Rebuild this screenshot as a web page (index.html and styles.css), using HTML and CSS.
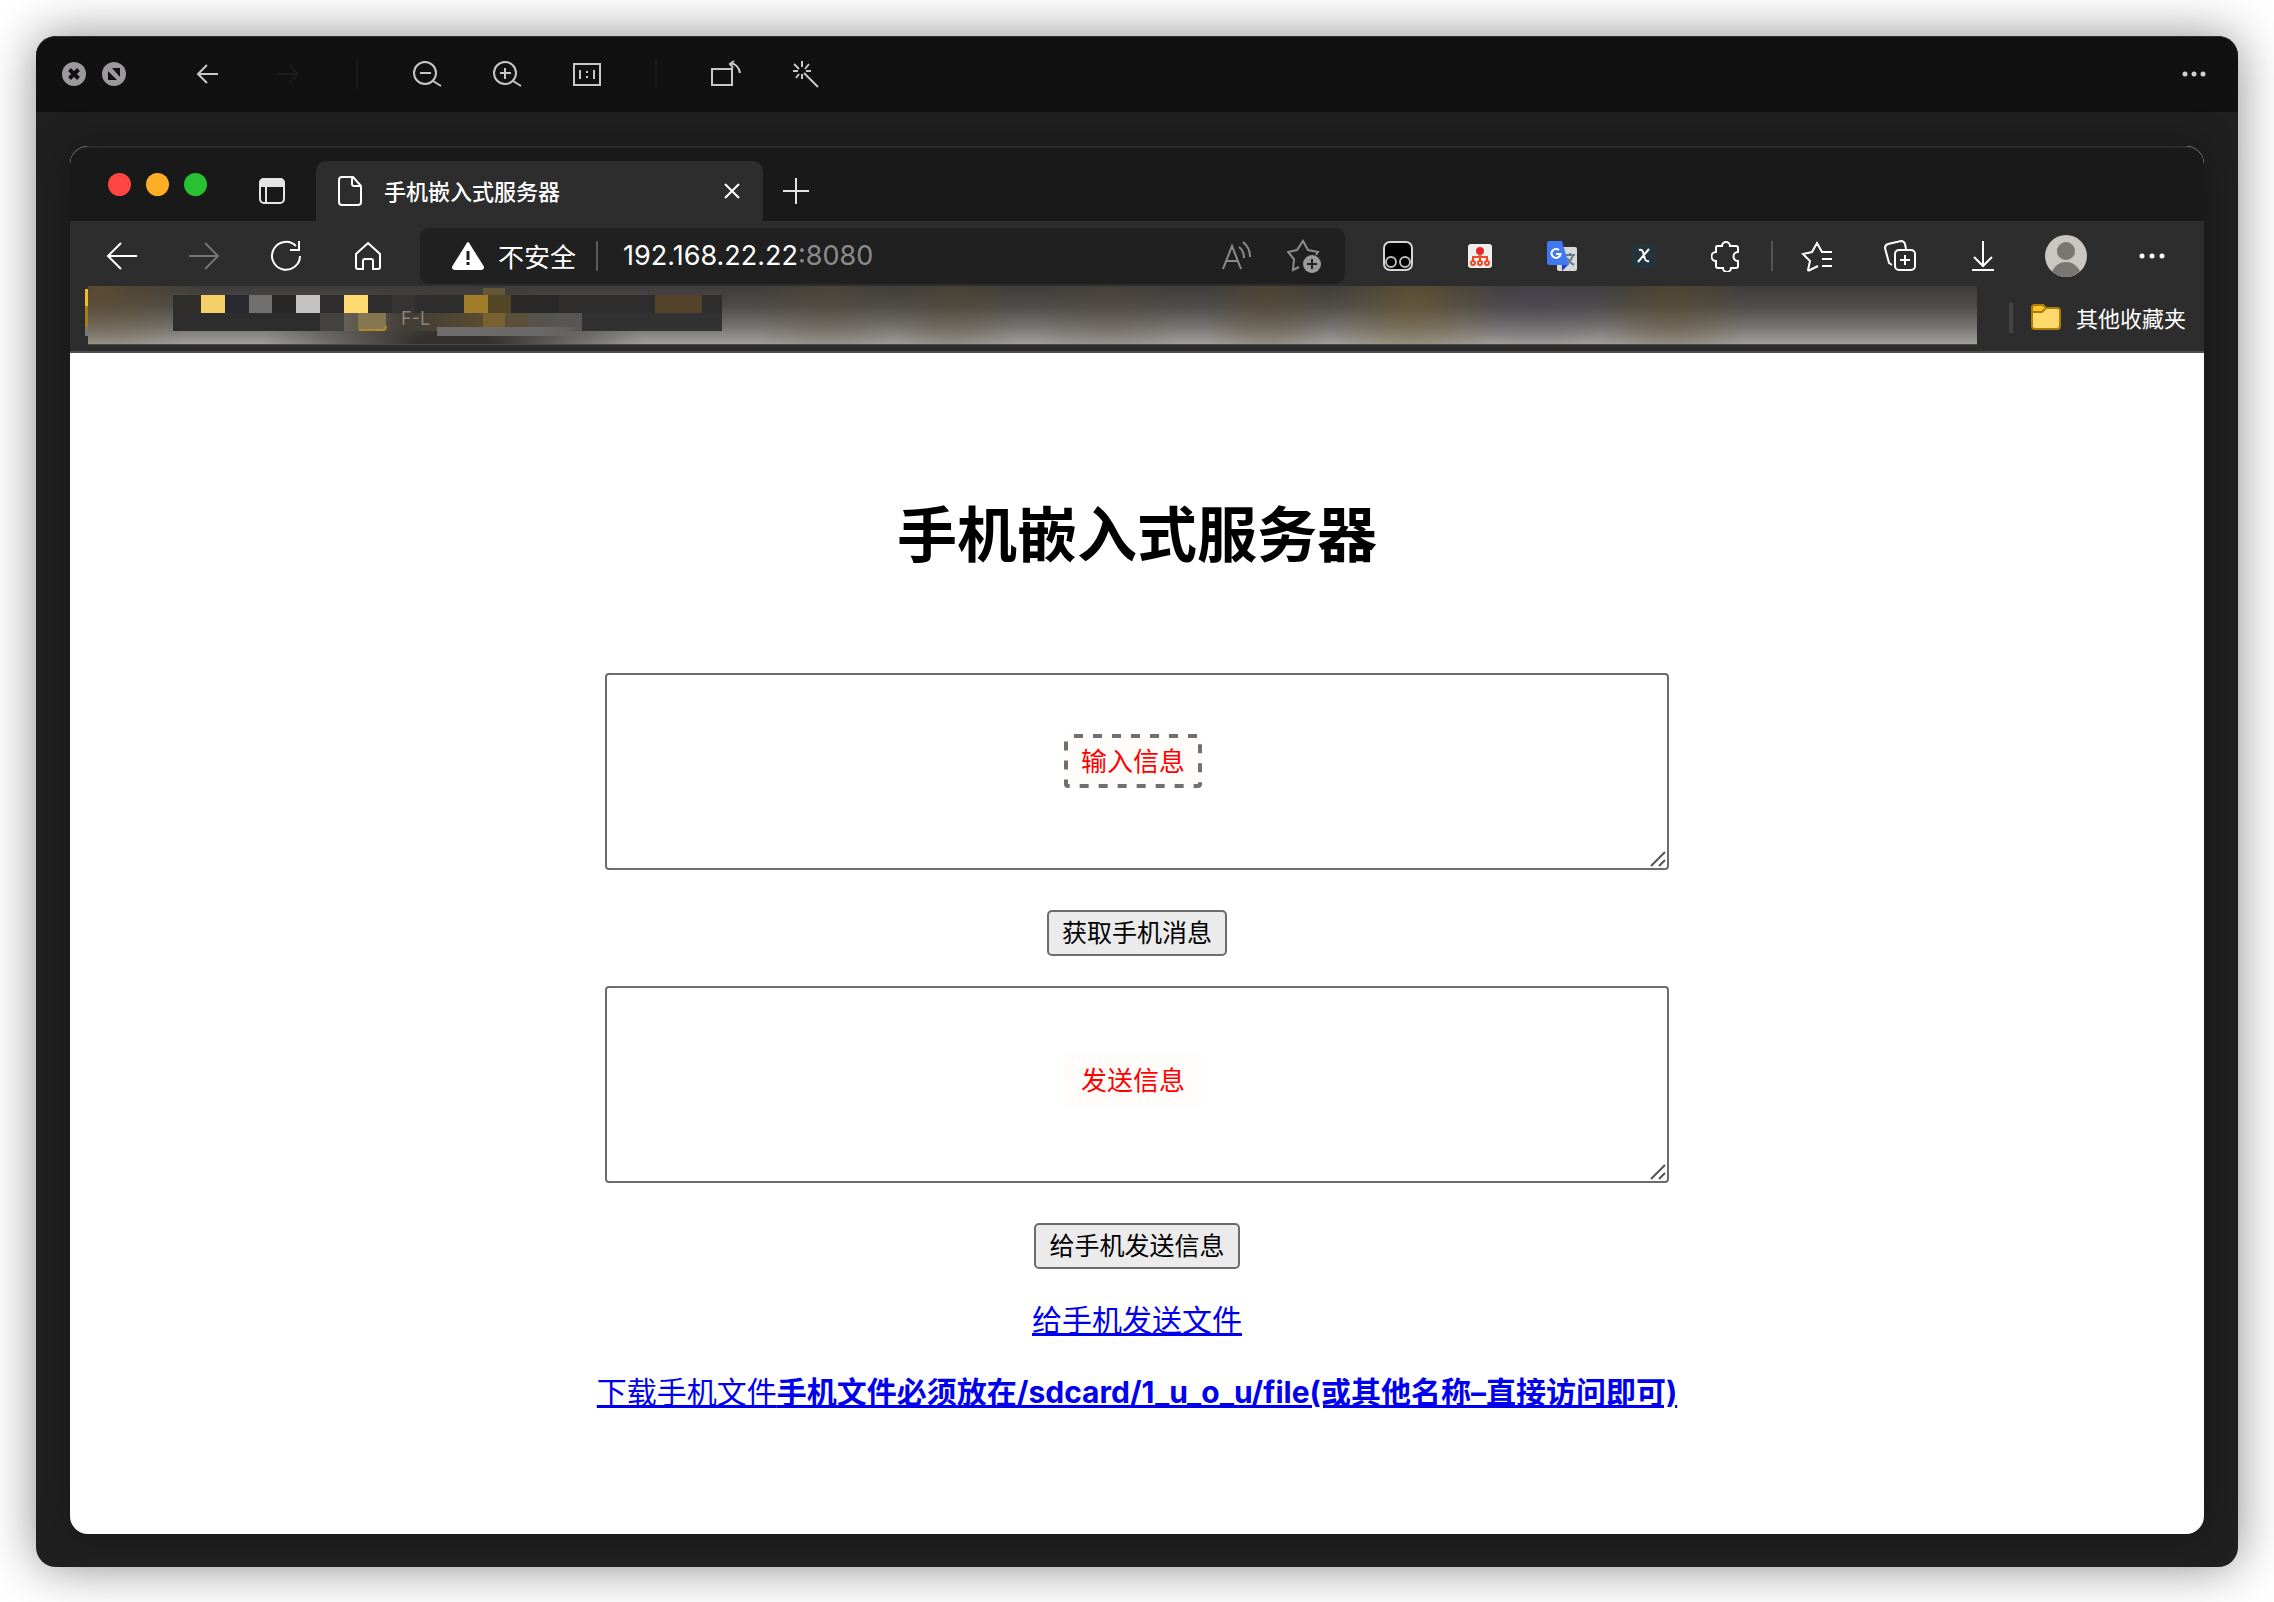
FILE: index.html
```html
<!DOCTYPE html>
<html lang="zh-CN">
<head>
<meta charset="utf-8">
<meta name="viewport" content="width=device-width, initial-scale=1">
<title>手机嵌入式服务器</title>
<link rel="stylesheet" href="styles.css">
</head>
<body>
<div class="viewer">
  <header class="viewer-bar">
    <div class="viewer-controls">
      <button class="dot-button" aria-label="关闭"><svg width="24" height="24" viewBox="0 0 24 24"><circle cx="12" cy="12" r="12" fill="#9b999b"/><path d="M7.500 7.500l9 9M16.500 7.500l-9 9" stroke="#111" stroke-width="4" fill="none"/></svg></button>
      <button class="dot-button" aria-label="全屏"><svg width="24" height="24" viewBox="0 0 24 24"><circle cx="12" cy="12" r="12" fill="#9b999b"/><path d="M10 6h8v9zM6 9l9 9H6z" fill="#111"/></svg></button>
    </div>
    <button class="viewer-button" aria-label="后退"><svg width="24" height="24" viewBox="0 0 24 24"><path d="M22 12H2M11 3l-9 9 9 9"/></svg></button>
    <button class="viewer-button faint" aria-label="前进"><svg width="24" height="24" viewBox="0 0 24 24"><path d="M1 12h21M13 3l9 9-9 9"/></svg></button>
    <span class="viewer-rule"></span>
    <button class="viewer-button" aria-label="缩小"><svg width="30" height="28" viewBox="0 0 30 28"><circle cx="13" cy="13" r="11"/><path d="M8 13h11M21 21l8 5"/></svg></button>
    <button class="viewer-button" aria-label="放大"><svg width="30" height="28" viewBox="0 0 30 28"><circle cx="13" cy="13" r="11"/><path d="M8 13h11M13 8v11M21 21l8 5"/></svg></button>
    <button class="viewer-button" aria-label="实际大小"><svg width="28" height="24" viewBox="0 0 28 24"><path d="M1 2h26v21H1zM7 8v9M21 8v9M14 9v2M14 14v2"/></svg></button>
    <span class="viewer-rule"></span>
    <button class="viewer-button" aria-label="旋转"><svg width="32" height="28" viewBox="0 0 32 28"><path d="M2 9h20v16H2zM20 4c5-1 9 3 10 9M24 1l-4 3 3 4"/></svg></button>
    <button class="viewer-button" aria-label="魔棒"><svg width="28" height="28" viewBox="0 0 28 28"><path d="M12 13l14 14M10 1v6M2 4l5 5M1 11h5M4 18l3-4M10 14v5M17 4l-4 5M14 11h5"/></svg></button>
    <button class="viewer-more" aria-label="更多"><svg width="24" height="8" viewBox="0 0 24 8"><g fill="#d0d0d0" stroke="none"><circle cx="3" cy="4" r="2.500"/><circle cx="12" cy="4" r="2.500"/><circle cx="21" cy="4" r="2.500"/></g></svg></button>
  </header>

  <div class="browser">
    <div class="tab-strip">
      <div class="lights"><span class="light red"></span><span class="light amber"></span><span class="light green"></span></div>
      <button class="tab-menu" aria-label="标签操作"><svg width="28" height="28" viewBox="0 0 28 28"><rect x="2" y="2" width="24" height="24" rx="4"/><path d="M2 9V6a4 4 0 0 1 4-4h16a4 4 0 0 1 4 4v3zM8 9v17" fill="#e4e4e4"/></svg></button>
      <div class="tab">
        <svg width="24" height="32" viewBox="0 0 24 32"><path d="M4 2h11l8 9v16a3 3 0 0 1-3 3H4a3 3 0 0 1-3-3V5a3 3 0 0 1 3-3zM14 2v7a2 2 0 0 0 2 2h7"/></svg>
        <span class="tab-title">手机嵌入式服务器</span>
        <button aria-label="关闭标签"><svg width="18" height="18" viewBox="0 0 18 18"><path d="M2 2l14 14M16 2L2 16"/></svg></button>
      </div>
      <button class="tab-new" aria-label="新建标签"><svg width="26" height="26" viewBox="0 0 26 26"><path d="M13 0v26M0 13h26"/></svg></button>
    </div>

    <div class="toolbar">
      <button class="tool" aria-label="后退"><svg width="32" height="30" viewBox="0 0 32 30"><path d="M31 15H2M15 2L2 15l13 13"/></svg></button>
      <button class="tool dim" aria-label="前进"><svg width="32" height="30" viewBox="0 0 32 30"><path d="M1 15h29M17 2l13 13-13 13"/></svg></button>
      <button class="tool" aria-label="刷新"><svg width="32" height="32" viewBox="0 0 32 32"><path d="M30 16A14 14 0 1 1 26 6M29 1v9h-9"/></svg></button>
      <button class="tool" aria-label="主页"><svg width="28" height="30" viewBox="0 0 28 30"><path d="M14 2l12 11v13a2 2 0 0 1-2 2h-5v-8a2 2 0 0 0-2-2h-6a2 2 0 0 0-2 2v8H4a2 2 0 0 1-2-2V13z"/></svg></button>
      <div class="address">
        <svg width="32" height="28" viewBox="0 0 32 28"><path d="M16 1L31 25q0 2-2 2H3q-2 0-2-2z" fill="#fff" stroke="#fff" stroke-linejoin="round"/><path d="M16 9v9M16 20v3" stroke="#202020" stroke-width="3"/></svg>
        <span class="insecure">不安全</span>
        <span class="address-rule"></span>
        <span class="url" role="textbox" aria-label="地址" contenteditable="true" spellcheck="false">192.168.22.22<span class="port">:8080</span></span>
        <button class="read" aria-label="朗读"><svg width="32" height="30" viewBox="0 0 32 30"><path d="M2 28L11 5l9 23M5 20h12M18 6c4 3 5 7 5 11M22 1c5 4 7 9 7 15"/></svg></button>
        <button aria-label="添加收藏"><svg width="36" height="34" viewBox="0 0 36 34"><path d="M12 28l-6 3 1-11-6-7 9-2 6-9 5 9 10 2-2 3"/><circle cx="25" cy="25" r="9" fill="#9a9a9a" stroke="none"/><path d="M20 25h10M25 20v10" stroke="#202020"/></svg></button>
      </div>
      <div class="extensions">
        <button class="tool" aria-label="脚本管理"><svg width="32" height="32" viewBox="0 0 32 32"><rect x="2" y="2" width="28" height="28" rx="6" fill="#000" stroke="#d5d5d5"/><g stroke="#bbb"><circle cx="9" cy="22" r="5"/><circle cx="23" cy="22" r="5"/></g></svg></button>
        <button class="tool" aria-label="网络图"><svg width="24" height="24" viewBox="0 0 24 24"><rect width="24" height="24" rx="3" fill="#eee" stroke="none"/><circle cx="12" cy="7" r="4" fill="#e8252b" stroke="none"/><path d="M12 10v7M5 17v-4h14v4" stroke="#f04a2a"/><g stroke="#f04a2a"><circle cx="5" cy="19" r="2"/><circle cx="12" cy="19" r="2"/><circle cx="19" cy="19" r="2"/></g></svg></button>
        <button class="tool" aria-label="翻译"><svg width="32" height="32" viewBox="0 0 32 32"><rect x="11" y="7" width="20" height="24" rx="2" fill="#d8d8d8" stroke="none"/><path d="M18 15h11M24 13v2M27 15q-2 7-8 10M21 18q3 5 7 7" stroke="#607d8b"/><path d="M16 25h6l-6 6z" fill="#2a3fc0" stroke="none"/><path d="M3 1h13l7 24H3q-2 0-2-2V3q0-2 2-2z" fill="#4078f2" stroke="none"/><path d="M13 10A4.500 4.500 0 1 0 14.500 14H10" stroke="#fff"/></svg></button>
        <button class="tool" aria-label="扩展 X"><svg width="24" height="24" viewBox="0 0 24 24"><rect width="24" height="24" rx="4" fill="#23343d" stroke="none"/><path d="M7 6q3-1 4 2l2 7q1 3 4 2M17 5L6 18"/></svg></button>
        <button class="tool" aria-label="扩展"><svg width="30" height="32" viewBox="0 0 30 32"><path d="M6 6h5a4 4 0 0 1 8 0h6q2 0 2 2v4a4 4 0 0 0 0 9v5q0 2-2 2h-5a4 4 0 0 1-8 0H7q-2 0-2-2v-5a4 4 0 0 1 0-9V8q0-2 1-2z"/></svg></button>
      </div>
      <span class="tool-rule"></span>
      <div class="browser-tools">
        <button class="tool" aria-label="收藏夹"><svg width="32" height="32" viewBox="0 0 32 32"><path d="M31 12H21l-5-9-5 9-9 2 7 7-2 9q0 1 2 0l8-4M21 19h10M21 26h10"/></svg></button>
        <button class="tool" aria-label="集锦"><svg width="32" height="32" viewBox="0 0 32 32"><path d="M8 25l-3-2L1 8q0-3 3-4l13-3q3 0 4 3l1 5"/><rect x="11" y="10" width="20" height="20" rx="4"/><path d="M16 20h10M21 15v10"/></svg></button>
        <button class="tool" aria-label="下载"><svg width="24" height="32" viewBox="0 0 24 32"><path d="M12 1v25M3 17l9 9 9-9M1 30h22"/></svg></button>
        <button class="tool" aria-label="个人资料"><svg width="42" height="42" viewBox="0 0 42 42"><defs><clipPath id="face"><circle cx="21" cy="21" r="21"/></clipPath></defs><g clip-path="url(#face)" stroke="none"><rect width="42" height="42" fill="#cac6c2"/><circle cx="21" cy="16" r="9" fill="#7a7673"/><circle cx="21" cy="42" r="15" fill="#7a7673"/></g></svg></button>
        <button class="tool last" aria-label="设置及更多"><svg width="26" height="8" viewBox="0 0 26 8"><g fill="#fff" stroke="none"><circle cx="3" cy="4" r="2.500"/><circle cx="13" cy="4" r="2.500"/><circle cx="23" cy="4" r="2.500"/></g></svg></button>
      </div>
    </div>

    <div class="bookmarks">
      <span class="bookmark-edge"></span>
      <div class="bookmark-haze">
        <svg width="549" height="52" viewBox="0 0 549 52">
          <defs><linearGradient id="smudge"><stop offset="0" stop-color="#666055"/><stop offset="0.300" stop-color="#413d36"/><stop offset="0.650" stop-color="#5a4c30"/><stop offset="1" stop-color="#555"/></linearGradient>
          <linearGradient id="streak"><stop offset="0" stop-color="#6e6d6b"/><stop offset="0.700" stop-color="#6a6967"/><stop offset="1" stop-color="#777" stop-opacity="0"/></linearGradient></defs>
          <path d="M310 2h22v7h-22z" fill="#665638"/>
          <path d="M0 9h549v36H0z" fill="#2d2d2d"/>
          <path d="M0 9h28v18H0z" fill="#302e2a"/><path d="M28 9h24v18H28z" fill="#f5d068"/><path d="M52 9h24v18H52z" fill="#282a30"/><path d="M76 9h23v18H76z" fill="#707070"/><path d="M99 9h24v18H99z" fill="#272727"/><path d="M123 9h24v18h-24z" fill="#c3c3c3"/><path d="M171 9h24v18h-24z" fill="#ffda70"/><path d="M219 9h23v18h-23z" fill="#343434"/><path d="M291 9h24v18h-24z" fill="#a37e2a"/><path d="M315 9h23v18h-23z" fill="#544727"/><path d="M338 9h48v18h-48z" fill="#292929"/><path d="M482 9h47v18h-47z" fill="#54432a"/>
          <path d="M147 27h24v18h-24z" fill="#444340"/><path d="M171 27h215v18H171z" fill="url(#smudge)"/>
          <path d="M185 27h28v14q0 4-4 4h-20q-4 0-4-4z" fill="#857750"/><path d="M186 44h24q3 0 3-4" fill="none" stroke="#b08a2c" stroke-width="2"/>
          <path d="M310 27h22v14h-22z" fill="#77622f"/><path d="M332 27h22v14h-22z" fill="#5b4f38"/><path d="M386 27h23v18h-23z" fill="#575655"/><path d="M409 27h140v18H409z" fill="#323232"/>
          <path d="M264 41h145v9H264z" fill="url(#streak)"/>
          <text class="haze-text" x="228" y="39">F-L</text>
        </svg>
      </div>
      <span class="bookmark-rule"></span>
      <button class="folder">
        <svg width="32" height="28" viewBox="0 0 32 28"><path d="M2 5q0-3 3-3h8l3 3h11q3 0 3 3v15q0 3-3 3H5q-3 0-3-3z" fill="#ffd96c" stroke="#b07b08"/><path d="M2 9V5q0-3 3-3h8l3 3-4 4z" fill="#fcc52b" stroke="#b07b08"/></svg>
        <span>其他收藏夹</span>
      </button>
    </div>

    <main class="page">
      <h1>手机嵌入式服务器</h1>
      <div class="field">
        <textarea id="receive"></textarea>
        <label class="note" for="receive"><svg class="dashes" width="138" height="54" viewBox="0 0 138 54"><rect x="2" y="2" width="134" height="50" rx="2" stroke-dasharray="9 10" stroke-dashoffset="-6"/></svg>输入信息</label>
        <svg class="grip" width="16" height="16" viewBox="0 0 16 16"><path d="M1 15L15 1M9 15l6-6"/></svg>
      </div>
      <button class="action">获取手机消息</button>
      <div class="field">
        <textarea id="send"></textarea>
        <label class="note lower" for="send">发送信息</label>
        <svg class="grip" width="16" height="16" viewBox="0 0 16 16"><path d="M1 15L15 1M9 15l6-6"/></svg>
      </div>
      <button class="action">给手机发送信息</button>
      <a href="#upload">给手机发送文件</a>
      <a href="#download">下载手机文件<b>手机文件必须放在/sdcard/1_u_o_u/file(或其他名称–直接访问即可)</b></a>
    </main>
  </div>
</div>
</body>
</html>
```
FILE: styles.css
```css
* {
  box-sizing: border-box;
}

body {
  margin: 0;
  padding: 36px;
  background: #fff;
  font-family: Inter, "Noto Sans CJK SC", sans-serif;
}

button {
  display: flex;
  align-items: center;
  justify-content: center;
  margin: 0;
  padding: 0;
  border: 0;
  background: none;
  color: inherit;
  font: inherit;
}

svg {
  display: block;
  flex: none;
  fill: none;
  stroke: currentColor;
  stroke-width: 2;
}

/* Image viewer window */
.viewer {
  padding-bottom: 33px;
  border-radius: 20px;
  background: #202020;
  box-shadow: 0 0 50px rgba(0, 0, 0, 0.45);
}

.viewer-bar {
  display: flex;
  align-items: center;
  height: 76px;
  padding: 0 32px 1px 26px;
  border-top: 1px solid #303030;
  border-radius: 20px 20px 0 0;
  background: #111;
  color: #c8c8c8;
}

.viewer-controls {
  display: flex;
  gap: 16px;
  margin-right: 42px;
}

.dot-button svg {
  stroke: none;
}

.viewer-button {
  width: 80px;
  height: 40px;
}

.viewer-button.faint {
  color: #1c1c1c;
}

.viewer-rule {
  width: 2px;
  height: 30px;
  margin: 0 29px 0 28px;
  background: #191919;
}

.viewer-more {
  margin-left: auto;
}

/* Browser window */
.browser {
  margin: 34px 34px 0;
  overflow: hidden;
  border-radius: 18px;
  background: #fff;
  box-shadow: 0 0 40px rgba(0, 0, 0, 0.3);
}

.tab-strip {
  display: flex;
  align-items: center;
  height: 75px;
  padding: 13px 38px 0;
  border-top: 2px solid #2b2b2b;
  border-radius: 18px 18px 0 0;
  background: #191919;
  color: #e4e4e4;
}

.lights {
  display: flex;
  gap: 15px;
  margin: 0 51px 14px 0;
}

.light {
  width: 23px;
  height: 23px;
  border-radius: 50%;
}

.red {
  background: #ff4645;
}

.amber {
  background: #ffae25;
}

.green {
  background: #28c131;
}

.tab {
  display: flex;
  align-items: center;
  width: 447px;
  height: 60px;
  margin: 0 20px 0 30px;
  padding: 0 22px;
  border-radius: 10px 10px 0 0;
  background: #2d2d2d;
  color: #fff;
}

.tab-title {
  flex: 1;
  margin-left: 22px;
  padding-bottom: 2px;
  font-size: 22px;
  font-weight: 500;
}

.toolbar {
  display: flex;
  align-items: center;
  height: 65px;
  padding: 4px 7px 0 11px;
  background: #2d2d2d;
  color: #fff;
}

.tool {
  width: 82px;
  height: 48px;
}

.dim {
  color: #757575;
}

.address {
  display: flex;
  flex: 1;
  align-items: center;
  height: 56px;
  margin: 0 12px 0 11px;
  padding: 0 22px 0 32px;
  border-radius: 9px;
  background: #202020;
  color: #8c8c8c;
}

.insecure {
  margin-left: 14px;
  color: #fff;
  font-size: 26px;
}

.address-rule {
  width: 2px;
  height: 30px;
  margin: 0 25px 0 20px;
  background: #5c5c5c;
}

.url {
  flex: 1;
  color: #fff;
  font-size: 27px;
  white-space: nowrap;
}

.port {
  color: #8c8c8c;
}

.read {
  margin-right: 34px;
}

.extensions,
.browser-tools {
  display: flex;
}

.tool-rule {
  width: 2px;
  height: 30px;
  margin: 0 2px 0 4px;
  background: #555;
}

.browser-tools .tool {
  width: 83px;
}

.browser-tools .last {
  width: 90px;
}

.bookmarks {
  display: flex;
  align-items: flex-start;
  height: 67px;
  padding: 0 18px 0 15px;
  border-bottom: 2px solid #4c4c4c;
  background: #2d2d2d;
  color: #fff;
}

.bookmark-edge {
  width: 3px;
  height: 47px;
  margin-top: 3px;
  background: linear-gradient(#f2bc24 0 36%, #a67c1c 36% 80%, #777 80%);
}

.bookmark-haze {
  flex: 1;
  height: 59px;
  padding-left: 85px;
  border-bottom: 1px solid #484848;
  background:
    radial-gradient(ellipse 190px 60px at 365px 58px, #35322d 0 20%, transparent),
    radial-gradient(ellipse 110px 80px at 10px 5px, rgba(106, 82, 44, 0.6), transparent),
    radial-gradient(ellipse 80px 90px at 740px 10px, rgba(96, 78, 50, 0.35), transparent),
    radial-gradient(ellipse 70px 90px at 865px 10px, rgba(90, 74, 40, 0.4), transparent),
    radial-gradient(ellipse 80px 90px at 1020px 10px, rgba(90, 74, 54, 0.3), transparent),
    radial-gradient(ellipse 70px 90px at 1180px 10px, rgba(96, 74, 40, 0.45), transparent),
    radial-gradient(ellipse 90px 90px at 1325px 14px, rgba(120, 96, 44, 0.5), transparent),
    radial-gradient(ellipse 90px 60px at 1450px 5px, rgba(76, 72, 90, 0.4), transparent),
    radial-gradient(ellipse 80px 90px at 1585px 14px, rgba(100, 76, 36, 0.45), transparent),
    linear-gradient(#3d3c3b, #4d4c4b 35%, #767472 70%, #a09e9b);
}

.bookmark-haze svg {
  stroke: none;
}

.haze-text {
  fill: #8a8377;
  font-size: 18px;
}

.bookmark-rule {
  width: 4px;
  height: 30px;
  margin: 17px 17px 0 32px;
  background: #444;
}

.folder {
  height: 62px;
  gap: 14px;
  font-size: 22px;
}

.folder span {
  padding-bottom: 1px;
}

/* Served page */
.page {
  display: flex;
  flex-direction: column;
  align-items: center;
  padding: 140px 0 121px;
  color: #000;
  font-size: 30px;
  line-height: 42px;
}

h1 {
  margin: 0 0 96px;
  font-size: 60px;
  line-height: 84px;
}

.field {
  position: relative;
  width: 50%;
  max-width: 1064px;
  height: 197px;
}

textarea {
  display: block;
  width: 100%;
  height: 100%;
  border: 2px solid #6c6c6c;
  border-radius: 4px;
  background: #fff;
  font: inherit;
  resize: none;
}

.note {
  position: absolute;
  top: 61px;
  right: 8px;
  left: 0;
  width: 138px;
  height: 54px;
  margin: 0 auto;
  background: #fffcfa;
  color: #f00;
  font-size: 26px;
  line-height: 56px;
  text-align: center;
}

.lower {
  top: 67px;
}

.dashes {
  position: absolute;
  inset: 0;
  color: #707070;
  stroke-width: 4;
}

.grip {
  position: absolute;
  right: 3px;
  bottom: 3px;
  color: #555;
}

.action {
  height: 46px;
  margin: 40px 0 30px;
  padding: 0 13px;
  border: 2px solid #6c6c6c;
  border-radius: 5px;
  background: #ebebeb;
  font-size: 25px;
}

a {
  color: #00e;
  text-decoration: underline;
}

a + a {
  margin-top: 30px;
}
```
